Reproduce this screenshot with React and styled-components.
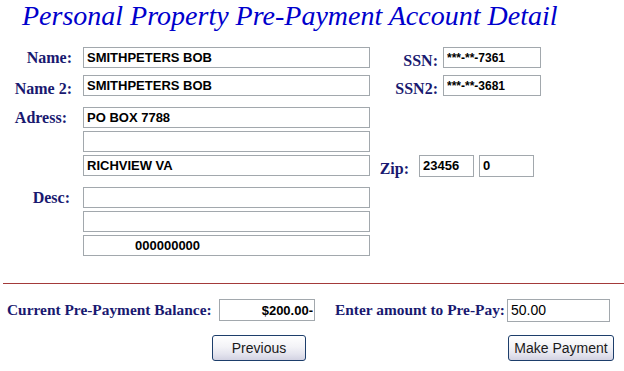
import React from "react";
import styled, { createGlobalStyle } from "styled-components";

const GlobalStyle = createGlobalStyle`
  html, body {
    margin: 0;
    padding: 0;
    background: #ffffff;
  }
  body {
    font-family: "Liberation Serif", "Times New Roman", serif;
  }
`;

const Page = styled.div`
  width: 624px;
  height: 371px;
  overflow: hidden;
  box-sizing: border-box;
`;

const Title = styled.h1`
  margin: 0 0 15px 22px;
  font-family: "Liberation Serif", "Times New Roman", serif;
  font-style: italic;
  font-weight: normal;
  font-size: 28px;
  line-height: 32px;
  color: #0000cc;
  white-space: nowrap;
`;

const Form = styled.div`
  display: flex;
  flex-direction: column;
`;

const Row = styled.div`
  display: flex;
  align-items: center;
  height: ${(p) => p.$h || 21}px;
  margin-top: ${(p) => p.$mt || 0}px;
`;

const Group = styled.div`
  display: flex;
  align-items: flex-start;
  margin-top: ${(p) => p.$mt || 0}px;
`;

const Stack = styled.div`
  display: flex;
  flex-direction: column;
  gap: 3px;
  margin-left: 11px;
`;

const Label = styled.label`
  box-sizing: border-box;
  flex: none;
  width: ${(p) => p.$w || 72}px;
  padding-right: ${(p) => p.$pr || 0}px;
  padding-top: ${(p) => p.$drop || 0}px;
  text-align: ${(p) => p.$align || "right"};
  font-family: "Liberation Serif", "Times New Roman", serif;
  font-weight: bold;
  font-size: ${(p) => p.$fs || 16}px;
  line-height: 18px;
  color: #191970;
  white-space: nowrap;
`;

const GroupLabel = styled(Label)`
  height: 21px;
  display: flex;
  align-items: center;
  justify-content: flex-end;
`;

const Field = styled.input`
  box-sizing: border-box;
  flex: none;
  width: ${(p) => p.$w}px;
  height: ${(p) => p.$h || 21}px;
  margin: 0 0 0 ${(p) => p.$ml || 0}px;
  padding: 0 ${(p) => p.$pr || 2}px 0 ${(p) => p.$pl || 3}px;
  border: 1px solid #a2a8ad;
  background: #ffffff;
  color: #000000;
  font-family: "Liberation Sans", Arial, sans-serif;
  font-weight: ${(p) => (p.$plain ? "normal" : "bold")};
  font-size: ${(p) => p.$fs || 13}px;
  text-align: ${(p) => p.$align || "left"};
  outline: none;
`;

const Rule = styled.div`
  margin: 27px 0 0 3px;
  height: 1px;
  background: #a33a3a;
`;

const PayRow = styled.div`
  display: flex;
  align-items: center;
  height: 22px;
  margin-top: 15px;
  padding-left: 7px;
`;

const ButtonRow = styled.div`
  display: flex;
  margin-top: 14px;
  padding-left: 212px;
`;

const Button = styled.button`
  box-sizing: border-box;
  width: ${(p) => p.$w}px;
  height: 26px;
  margin-left: ${(p) => p.$ml || 0}px;
  padding: 0;
  border: 1px solid #1d3e6b;
  border-radius: 3px;
  background: linear-gradient(#ffffff 0%, #f3f3f7 45%, #e4e4ee 75%, #d2d2e2 100%);
  color: #1a1a1a;
  font-family: "Liberation Sans", Arial, sans-serif;
  font-size: 14px;
  cursor: pointer;
`;

export default function App() {
  return (
    <Page>
      <GlobalStyle />
      <Title>Personal Property Pre-Payment Account Detail</Title>
      <Form>
        <Row>
          <Label>Name:</Label>
          <Field $w={287} $ml={11} readOnly value="SMITHPETERS BOB" />
          <Label $w={68} $drop={7}>SSN:</Label>
          <Field $w={98} $ml={5} $fs={12} readOnly value="***-**-7361" />
        </Row>
        <Row $mt={7}>
          <Label $drop={6}>Name 2:</Label>
          <Field $w={287} $ml={11} readOnly value="SMITHPETERS BOB" />
          <Label $w={68} $drop={6}>SSN2:</Label>
          <Field $w={98} $ml={5} $fs={12} readOnly value="***-**-3681" />
        </Row>
        <Group $mt={11}>
          <GroupLabel $pr={5}>Adress:</GroupLabel>
          <Stack>
            <Row>
              <Field $w={287} readOnly value="PO BOX 7788" />
            </Row>
            <Row>
              <Field $w={287} readOnly value="" />
            </Row>
            <Row>
              <Field $w={287} readOnly value="RICHVIEW VA" />
              <Label $w={39} $drop={6}>Zip:</Label>
              <Field $w={55} $h={22} $ml={10} readOnly value="23456" />
              <Field $w={55} $h={22} $ml={5} readOnly value="0" />
            </Row>
          </Stack>
        </Group>
        <Group $mt={11}>
          <GroupLabel $pr={2}>Desc:</GroupLabel>
          <Stack>
            <Field $w={287} readOnly value="" />
            <Field $w={287} readOnly value="" />
            <Field $w={287} $pl={51} readOnly value="000000000" />
          </Stack>
        </Group>
      </Form>
      <Rule />
      <PayRow>
        <Label $w={205} $fs={15.4} $align="left">Current Pre-Payment Balance:</Label>
        <Field $w={96} $h={22} $ml={7} $align="right" $pr={1} readOnly value="$200.00-" />
        <Label $w={170} $fs={15.4} $align="left" style={{ marginLeft: 20 }}>Enter amount to Pre-Pay:</Label>
        <Field $w={103} $h={23} $ml={2} $plain $fs={14} defaultValue="50.00" />
      </PayRow>
      <ButtonRow>
        <Button $w={94}>Previous</Button>
        <Button $w={106} $ml={202}>Make Payment</Button>
      </ButtonRow>
    </Page>
  );
}
